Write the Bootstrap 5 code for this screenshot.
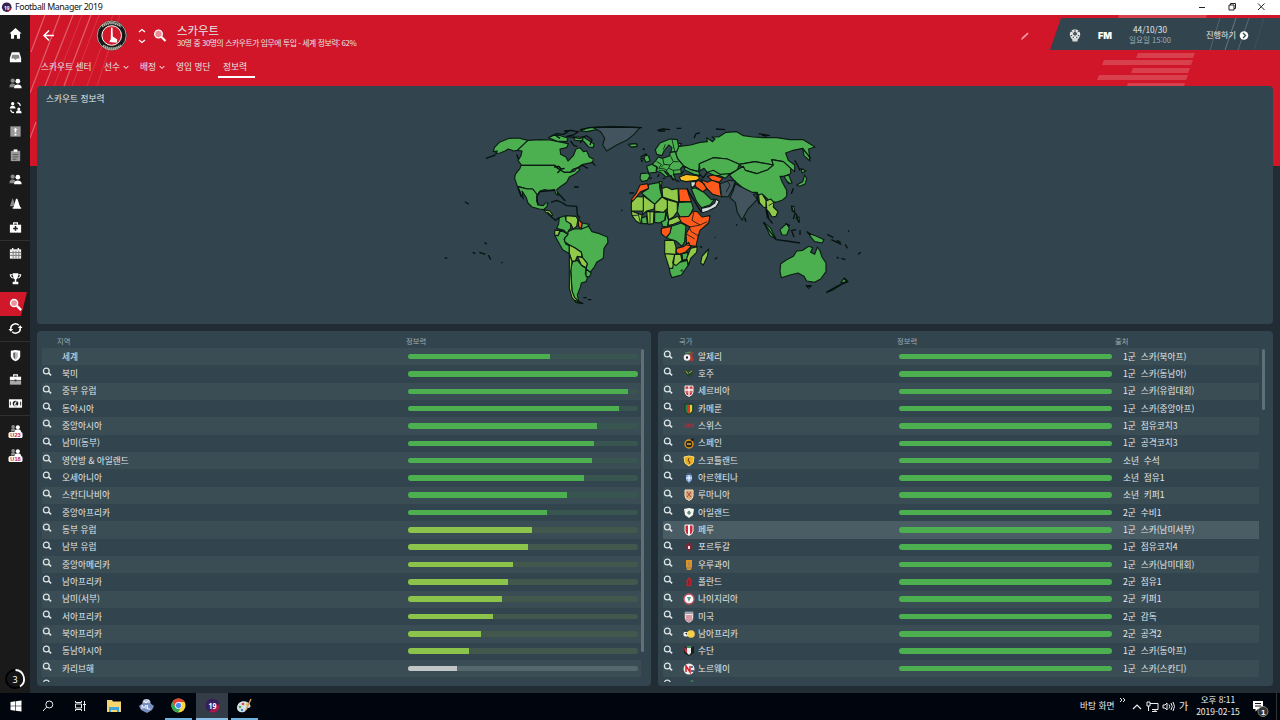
<!DOCTYPE html>
<html lang="ko">
<head>
<meta charset="utf-8">
<title>Football Manager 2019</title>
<link rel="stylesheet" href="https://cdn.jsdelivr.net/npm/bootstrap@5.3.0/dist/css/bootstrap.min.css">
<style>
  body{width:1280px;height:720px;overflow:hidden;font-family:"Noto Sans","Noto Sans CJK KR",sans-serif;font-size:8.7px;line-height:1;color:#e3e8ea;background:#222d36}
  svg{display:block;flex:none}
  .ko{font-family:"Noto Sans CJK KR",sans-serif;white-space:nowrap}
  .titlebar{height:15px;background:#fff;color:#111}
  .apptitle{font-size:8.8px;letter-spacing:-.38px}
  .game{height:678px}
  .side{width:30px;background:#1a1a1a;padding-top:6px}
  .side .it{height:24px;display:flex;align-items:center;justify-content:center}
  .side .rule{height:1px;background:#303030}
  .side .on{background:#d1172a;clip-path:polygon(0 0,27px 0,21px 100%,0 100%)}
  .stage{width:1250px;background:linear-gradient(#d01628 0 151px,#212c35 151px 100%)}
  .head{height:71px}
  .toprow{height:41px}
  .ttl{font-size:11.400px;line-height:14px}
  .subt{font-size:7.800px;line-height:11px;letter-spacing:-.4px;padding-top:0}
  .tabs{height:30px;padding-left:11px}
  .tabs>div{height:22px;display:flex;align-items:center;gap:3px}
  .tabs .sel{border-bottom:2px solid #fff;padding:2px 7px 0 5px;width:37px}
  .cont{width:230px;height:32px;margin-top:-3px;background:#32454e;clip-path:polygon(11px 0,100% 0,100% 100%,0 100%)}
  .pane{background:#32454e;border-radius:4px}
  .mapbox{width:1236px;height:238px;margin-left:7px}
  .lists{margin:7px 0 0 7px;gap:7px}
  .lp{width:614px;height:355px;padding:6px 5px 0}
  .rp{width:615px;height:355px;padding:6px 5px 0}
  .th9{height:11px;padding-top:1px;font-size:7.3px;color:#9dabb1}
  .rows{height:334px;overflow:hidden}
  .ln{height:17.333px}
  .ln:nth-child(odd){background:#3a4d54}
  .ln.hot{background:#4b5d64}
  .ln .tx{padding-top:1px}
  .lens{width:20px;padding-bottom:3px}
  .lastlens{padding-top:2px}
  .track{height:5.6px;border-radius:3px;overflow:hidden;background:#395550}
  .fill{height:100%}
  .sb{width:3px;border-radius:2px;background:#5f7178;margin-top:1px}
  .taskbar{height:27px;background:#01050d;color:#eee}
  .tk{width:32px;height:27px;display:flex;align-items:center;justify-content:center;border-bottom:2px solid transparent}
  .tk.run{border-color:#70b2df;width:27px;margin:0 3px}
  .tk.act{background:#343c47;border-color:#86bfe8}
</style>
</head>
<body class="d-flex flex-column">
<div class="titlebar d-flex align-items-center">
  <svg width="15" height="15" viewBox="0 0 15 15"><circle cx="6.7" cy="7.2" r="4.8" fill="#322151"/><path d="M6.5 12a4.8 4.8 0 0 0 5-5" fill="#b5193c"/><text x="4" y="10" font-size="6" font-weight="700" fill="#fff" textLength="5.500" lengthAdjust="spacingAndGlyphs">19</text></svg>
  <span class="apptitle">Football Manager 2019</span>
  <svg class="ms-auto" width="82" height="15" viewBox="0 0 82 15" fill="none" stroke="#222" stroke-width="1"><path d="M1 7.5h6M60 3.5l6.5 6.500M66.500 3.500l-6.500 6.500"/><path d="M31 5h5v5h-5zM32.500 5v-1.500h5v5h-1.500"/></svg>
</div>

<div class="game d-flex">
  <nav class="side d-flex flex-column position-relative" id="side"></nav>
  <main class="stage position-relative">
    <svg class="position-absolute top-0 start-0" width="1250" height="151" viewBox="30 15 1250 151" fill="none" stroke="#fff">
      <g stroke-opacity=".3" stroke-width="1.3"><path d="M45 15L31 52M60 15L30 93M73 15L45 86M91 15L64 86M36 122L30 138"/></g>
      <g stroke-opacity=".14" stroke-width="1"><path d="M82 15L54 86M99 15L72 86M113 15L87 86M120 15L97 86"/></g>
      <g fill="#fff" fill-opacity=".18" stroke="none"><path d="M1119 15h88l-1 3h-88zM1138 53h57l-2 5h-57zM1104 60h89l-2 5h-89zM1133 68h57l-2 5h-57zM1099 75h89l-2 5h-89zM1128 83h57l-1 3h-57z"/></g>
    </svg>
    <header class="head position-relative">
      <div class="toprow d-flex align-items-center">
        <svg width="147" height="41" viewBox="30 15 147 41">
          <path d="M54 35.500H44.500M49 30.500l-5 5 5 5" fill="none" stroke="#fff" stroke-width="1.5"/>
          <circle cx="111.700" cy="35.500" r="15" fill="#181818"/><circle cx="111.700" cy="35.500" r="14.500" fill="none" stroke="#cfcfc4" stroke-width=".8"/><circle cx="111.700" cy="35.500" r="9.800" fill="#d31a2c" stroke="#fff" stroke-width="1"/>
          <path d="M102 26.500q9.500-7 19 0M103 45.500q9 6 18 0" fill="none" stroke="#b9b9a8" stroke-width="2.300" stroke-dasharray="1.500 .5"/>
          <path d="M111 27.500h1.500l.3 9 4.500 3-.5 3.300-7.500-.8 1.500-3z" fill="#fff"/>
          <path d="M139 32l3-2.500 3 2.500M139 40l3 2.500 3-2.500" fill="none" stroke="#fff" stroke-width="1.300"/>
          <circle cx="158.500" cy="34" r="3.800" fill="#e98e97" stroke="#fff" stroke-width="1.300"/><path d="M161.500 37l4 4" stroke="#fff" stroke-width="2.200"/>
        </svg>
        <div class="ko">
          <div class="ttl">스카우트</div>
          <div class="subt">30명 중 30명의 스카우트가 임무에 투입 - 세계 정보력: 62%</div>
        </div>
        <svg class="ms-auto" style="margin-right:19px" width="12" height="12" viewBox="0 0 12 12"><path d="M2 10l1-2.500 5.500-5 1.200 1.200L4 9z" fill="#f19aa3"/></svg>
        <div class="cont d-flex align-items-center position-relative">
          <svg class="position-absolute top-0 start-0" width="230" height="32" viewBox="1050 18 230 32"><g stroke="#8295a0" fill="none"><path d="M1220 18l-10 32" stroke-opacity=".4"/><path d="M1236 18l-11 32" stroke-opacity=".65"/><path d="M1249 18l-11 32" stroke-opacity=".45"/><path d="M1264 18l-10 32" stroke-opacity=".15"/></g>
            <circle cx="1075" cy="34.500" r="5.200" fill="#e8e8e8"/><path d="M1072 38h6l-.5 3.500h-5z" fill="#d8d8d8"/><path d="M1073.500 33l1.500-1.200 1.500 1.200-.5 2h-2zM1070.500 36l1.800-.8M1079.500 36l-1.800-.8M1075 29.500v1.800M1071 31l1.500 1M1079 31l-1.500 1M1073 38l.7-1.500M1077 38l-.7-1.500" fill="#596970" stroke="#38464f" stroke-width="1"/>
            <text x="1098" y="39" font-family="Inter" font-size="9.500" font-weight="900" fill="#fff" textLength="14" lengthAdjust="spacingAndGlyphs">FM</text>
            <circle cx="1244" cy="35.500" r="4.300" fill="#fff"/><path d="M1243 33l2.500 2.500-2.500 2.500" fill="none" stroke="#32454e" stroke-width="1.300"/></svg>
          <div class="ko text-center" style="margin-left:76px;width:48px;padding-top:1px;font-size:8.3px;line-height:9.500px"><div>44/10/30</div><div style="color:#9daeb5;font-size:7.6px">일요일 15:00</div></div>
          <span class="ko position-relative" style="margin-left:32px;font-size:8.200px">진행하기</span>
        </div>
      </div>
      <div class="tabs d-flex ko">
        <div style="width:63px">스카우트 센터</div>
        <div style="width:36px">선수 <svg width="6" height="5" viewBox="0 0 6 5"><path d="M.7 1L3 3.500 5.300 1" fill="none" stroke="#fff"/></svg></div>
        <div style="width:36px">배정 <svg width="6" height="5" viewBox="0 0 6 5"><path d="M.7 1L3 3.500 5.300 1" fill="none" stroke="#fff"/></svg></div>
        <div style="width:42px">영입 명단</div>
        <div class="sel">정보력</div>
      </div>
    </header>

    <section class="pane mapbox position-relative">
      <div class="ko" style="padding:9px 9px 0;font-size:8.7px">스카우트 정보력</div>
      <svg class="position-absolute" style="left:403px;top:29px" width="430" height="200" viewBox="0 0 1290 600" stroke="#0b1c14" stroke-width="3.400" stroke-linejoin="round">
        <g fill="#4cb050">
          <path d="M163 98L178 82 208 70 235 69 264 76 232 106 222 108 205 102 195 108 180 114 166 116 172 108 160 110z"/>
          <path d="M264 76L300 74 330 75 355 80 385 86 380 98 360 102 362 118 378 126 384 138 392 130 400 122 408 102 420 98 430 110 440 108 448 126 460 132 458 142 430 148 415 158 400 162 390 172 372 172 350 156 345 151 244 150 234 136 243 122 246 108 232 106z"/>
          <path d="M243 151H345L352 160 372 172 392 172 404 168 412 158 420 164 404 178 388 186 380 202 360 216 350 224 354 242 347 236 344 224 326 226 312 224 300 228 292 240 278 222 262 222 246 218 232 214 224 190 226 178 240 160z"/>
          <path d="M232 214L246 218 262 222 278 222 292 240 290 258 294 270 310 272 316 264 324 264 320 276 310 284 298 282 276 276 264 264 258 246 246 228 250 252 244 240 238 224z"/>
          <path d="M358 308L374 302 378 314 392 326 392 340 386 346 384 358 372 346 350 340 356 326zM426 324L448 328 440 338 424 342z"/>
          <path d="M344 360L354 362 362 346 384 358 372 372 378 388 388 392V416L368 404 352 376z"/>
          <path d="M384 350L400 342 424 342 446 334 456 350 478 356 502 366 504 382 492 400 490 430 470 442 462 458 450 472 438 462 442 446 428 430 424 412 404 398 388 390 374 380 374 370 384 358z"/>
          <path d="M398 440L412 436 426 452 438 460 436 476 442 490 438 500 424 504 422 514 412 540 416 560 402 548 396 528 394 490 392 460zM438 462L454 474 448 486 438 484z"/>
          <path d="M325 68L340 60 362 62 384 70 380 80 350 78zM400 66L430 66 462 86 460 98 446 96 430 78 405 76zM420 48L445 38 480 36 470 44 440 50zM566 88L590 86 592 94 575 96z"/>
        </g>
        <g fill="#91c94b">
          <path d="M310 284L330 288 338 300 332 304 322 296zM378 302L408 304 414 314 410 334 400 342 392 326 378 318zM344 346L360 346 354 362 344 360zM388 390L404 398 424 412 426 426 412 424 406 438 396 438 388 416zM412 424L428 428 442 446 438 458 424 450z"/>
          <path d="M388 416L396 440 392 470 396 528 404 548 424 566 408 562 396 548 388 520z"/>
        </g>
        <path d="M414 312L426 324 424 342 416 334z" fill="#ff5a1c"/>
        <path d="M460 38L510 34 600 38 582 58 560 76 530 90 510 102 500 108 488 90 494 70 482 50z" fill="#44545f"/>
        <g fill="none" stroke="#071210" stroke-width="4">
          <path d="M138 130L166 120M330 66L350 56 370 58 390 46 415 50 400 60 380 64 420 70 440 62 456 74 450 90M345 60L360 70M372 48L400 46M430 70L420 84M392 78L402 92 412 94M420 44L450 38 540 36 606 38M342 156L356 154 364 162 374 160M352 174L362 164M412 160L425 150 444 160M455 140L466 152M236 134L230 118M234 220L244 246"/>
          <path d="M294 270L290 244 300 230 345 226M333 262L350 256 368 264 380 272 410 274 412 300 420 310M352 232L376 258M332 304L346 316 358 308M322 292L336 304M402 216L416 216M75 260L86 268M134 382L140 388M98 412L106 416M118 412L136 418M145 420L152 434M14 428L22 430M184 442L188 444M430 548H440M404 556L430 566"/>
          <path d="M444 554H454M568 234H582M545 284V288M610 100L614 104"/>
        </g>
        <g transform="translate(540 0)">
          <g fill="#4cb050">
            <path d="M168 84L185 86 178 94 212 90 240 82 262 80 260 68 278 80 285 72 276 66 296 66 318 52 350 50 370 62 400 66 430 68 470 68 510 74 550 74 585 96 566 102 570 138 552 122 548 100 520 106 497 114 505 136 524 150 524 170 512 160 490 140 455 134 460 150 405 140 358 148 322 132 280 128 238 146 236 170 212 164 190 152 172 130 166 110z"/>
            <path d="M238 146L280 128 322 132 358 148 352 164 330 176 300 178 280 166 262 172 252 160 240 168zM358 148L405 140 460 150 444 164 410 176 376 166zM262 172L280 166 300 178 330 176 316 190 300 182 285 182z"/>
            <path d="M328 180L352 164 370 154 376 166 410 176 444 164 460 150 455 134 490 140 512 160 512 176 492 184 480 184 486 200 500 226 500 244 486 256 468 262 448 258 430 240 400 236 372 222 344 198z"/>
            <path d="M492 184L506 180 516 204 506 206 498 194zM554 180L560 190 556 206 540 214 530 210 548 200zM543 160L558 168 546 174z"/>
            <path d="M62 176L84 174 90 182 82 196 66 200 60 190zM80 154L96 148 110 156 108 172 86 174z"/>
            <path d="M72 130L78 118 86 124 90 138 78 142zM62 130L70 130 66 140z"/>
            <path d="M106 104L120 84 150 72 172 74 176 96 170 110 152 112 156 98 146 90 132 108 126 122 110 118z"/>
            <path d="M96 148L108 136 114 126 128 130 150 122 150 112 166 110 172 130 190 152 182 160 184 176 160 178 168 196 154 188 142 172 132 168 146 184 138 186 122 172 110 170 112 156z"/>
            <path d="M190 152L212 164 236 170 240 182 222 178 196 166z"/>
            <path d="M86 208L118 202 120 222 126 246 104 268 64 234 84 222zM176 262L214 260 220 280 208 304 180 306 172 290z"/>
            <path d="M104 292L138 290 134 316 118 324 104 322zM138 292L146 316 142 336 128 334 124 322 136 314zM154 334L184 324 198 332 196 356 194 380 186 394 168 378 148 372 140 368 150 354zM186 416L204 412 202 432 188 436zM148 460L158 446 186 440 202 436 204 452 184 480 156 488 150 474zM64 310L80 304 82 326 66 326z"/>
            <path d="M214 222L226 218 252 232 274 254 284 252 270 270 244 278 230 260z"/>
            <path d="M432 322L452 340 468 372 450 362zM480 344L500 326 508 340 500 360 486 360zM564 354L590 364 612 374 606 384 584 380 574 368z"/>
            <path d="M482 446L500 434 520 424 530 408 548 406 566 394 578 398 572 412 584 418 592 396 600 408 606 426 618 444 618 470 602 492 584 502 560 498 552 484 534 474 510 480 484 488 480 470zM558 512L574 512 566 520zM620 532L650 514 664 508 642 524zM662 504L680 500 672 490z"/>
            <path d="M25 88L48 86 52 94 34 96zM516 274L522 274 524 290 516 288zM528 308L538 306 538 322z"/>
          </g>
          <g fill="#91c94b">
            <path d="M118 200L126 200 124 220zM126 220L140 216 156 224 174 220 176 262 146 252 128 246zM34 262L44 244 70 246V288L34 288zM70 242L104 268 102 282 80 288 66 300 70 286zM104 268L126 246 142 256V280L130 292 104 288zM142 254L172 262 172 290 160 306 146 314 142 290zM34 288L66 300 62 326 48 318 36 302zM80 290L102 290 100 326 84 328zM146 316L174 304 184 318 160 328 144 332zM134 376L162 376 168 396 168 418 134 416zM212 400L232 394 230 412 212 430 206 450 200 430zM134 416L164 418 158 460 148 460zM164 418L182 418 186 436 168 452 158 444zM246 424L266 402 262 424 250 450 242 444z"/>
            <path d="M416 240L426 236 438 256 440 280 430 276 418 262zM438 258L452 252 462 262 460 276 474 290 468 304 456 306 446 290 438 282z"/>
          </g>
          <g fill="#ff5a1c">
            <path d="M60 210L82 206 86 220 62 230 46 250 34 262 36 250 48 236zM176 222L202 222 206 238 214 260 178 260z"/>
            <path d="M176 306L206 304 220 288 232 290 246 306 270 302 266 324 240 346 234 366 228 394 200 390 198 356 210 336 184 322zM124 340L154 334 150 354 138 368 124 356zM170 400L192 394 206 382 212 396 196 412 178 418 168 412z"/>
            <path d="M262 184L280 180 308 190 298 202 276 196zM244 194L262 202 276 196 298 204 302 236 308 246 278 238 262 222 250 206zM222 204L236 196 252 206 260 222 248 230 228 216z"/>
          </g>
          <g fill="#44545f"><path d="M300 206L330 196 346 198 338 222 324 246 304 244 302 220zM346 206L360 214 396 232 412 232 414 250 400 266 384 282 374 300 366 316 352 292 346 262 330 248 340 226zM400 238L410 236 412 252z"/></g>
          <path d="M178 186L200 178 232 182 240 190 230 196 198 200 182 196z" fill="#ffbf1f"/>
          <path d="M212 200L228 200 224 212 214 218zM244 280L270 274 284 264 288 252 298 260 288 276 264 288 246 294z" fill="#d5d9df"/>
          <g fill="none" stroke-width="2.500">
            <path d="M110 140L124 148 116 160 130 160 142 168M128 130L132 148 150 150 160 140 152 124M132 148L124 156M150 150L146 160 160 166 180 164M146 160L138 166M160 140L176 140M160 166L162 178M116 166L132 166M136 88L130 104M156 74L164 108M206 334L214 350 234 362M222 290L216 316 240 330 262 320M210 336L240 330M198 356L224 372M54 292L60 320M90 290V326M36 302L56 300M322 198L330 210 318 232M240 196L250 190M188 462L182 468 190 468M462 262L446 272"/>
          </g>
          <g fill="none" stroke="#071210" stroke-width="4">
            <path d="M112 46L128 42 150 44M116 48H136M170 40H184M288 42L316 44M222 70L228 56 240 54M416 56L450 62M426 60L440 64M62 126L80 116M68 102L72 104M88 192L96 188M112 186L118 178M128 190L136 190M152 180L160 196M168 196L178 200M182 178L192 168M238 178L250 188 262 172M524 136L532 150 540 166M506 206V200M520 220L514 236M514 272L518 286 530 300 536 322M524 298L520 312M374 308L378 320M438 284L442 306 458 326M430 322L468 374 500 378 540 384M496 326L510 332M512 348L528 344M516 350L522 366M540 346V360M560 350L574 360M622 358L640 368M634 374L664 388M650 376L662 382M676 388L682 400M650 426L656 430M664 430L676 434M714 418L722 412M686 346V350M620 532L664 508 684 500 672 488M560 514H574M284 432L292 428M240 394L246 398M286 366V368M350 328V332M200 220L244 292M410 246L418 268M548 100L572 130M440 284L446 308"/>
          </g>
        </g>
      </svg>
    </section>

    <div class="lists d-flex">
      <section class="pane lp">
        <div class="th9 ko d-flex"><span style="width:350px;padding-left:15px">지역</span><span style="padding-left:14px">정보력</span></div>
        <div class="d-flex"><div class="rows flex-fill" id="regions"></div><div class="sb" style="height:303px"></div><div style="width:2px"></div></div>
      </section>
      <section class="pane rp">
        <div class="th9 ko d-flex"><span style="width:234px;padding-left:16px">국가</span><span style="width:218px">정보력</span><span>출처</span></div>
        <div class="d-flex"><div class="rows" style="width:596px" id="nations"></div><div class="sb" style="height:61px;margin-left:3px"></div></div>
      </section>
    </div>
  </main>
</div>

<footer class="taskbar d-flex">
  <div class="tk"><svg width="12" height="12" viewBox="0 0 12 12" fill="#fff"><path d="M.5 2l4.700-.7v4.400H.5zM5.800 1.200L11.500.4v5.300H5.800zM.5 6.300h4.700v4.400L.5 10zM5.800 6.300h5.700v5.300l-5.700-.8z"/></svg></div>
  <div class="tk"><svg width="12" height="12" viewBox="0 0 12 12" fill="none" stroke="#eee"><circle cx="7.300" cy="4.500" r="3.500"/><path d="M4.700 7L1 11"/></svg></div>
  <div class="tk"><svg width="13" height="12" viewBox="0 0 13 12" fill="none" stroke="#eee"><path d="M1.500 4h6v4h-6zM1.500 1v1.500h6V1M1.500 11V9.500h6V11M10.500 1v10M9 4.500h3"/></svg></div>
  <div class="tk" style="margin-left:2px"><svg width="16" height="14" viewBox="0 0 16 14"><path d="M1 1h5l1 1.500h8V13H1z" fill="#f6d56c"/><path d="M3 8h10v5h-2v-2H5v2H3z" fill="#3ea6df"/></svg></div>
  <div class="tk"><svg width="17" height="15" viewBox="0 0 17 15"><circle cx="8.500" cy="5" r="4" fill="#b9c5dd"/><path d="M1 8l4-3h7l4 3-2 4-5 3-6-3z" fill="#7890bd"/><path d="M4 11V7l2 3 2-3v4M9.500 7v4h3M6 3l2 2 3-3" fill="none" stroke="#eef3ff"/></svg></div>
  <div class="tk run"><svg width="15" height="15" viewBox="0 0 15 15"><circle cx="7.500" cy="7.500" r="7" fill="#fdd440"/><path d="M1.400 4A7 7 0 0 1 13.600 4H7.500l-3 5.300z" fill="#e34334"/><path d="M1.400 4l3.300 5.500 5.600-.3-3.400 5.300A7 7 0 0 1 1.400 4z" fill="#30a852"/><circle cx="7.500" cy="7.500" r="3.200" fill="#4b8bf4" stroke="#fff" stroke-width=".9"/></svg></div>
  <div class="tk act" style="margin-left:1px"><svg width="15" height="15" viewBox="0 0 15 15"><circle cx="7.500" cy="7.500" r="7" fill="#35205b"/><path d="M14.500 6A7 7 0 0 1 4 13.500l5-4z" fill="#a81a4b"/><text x="3.500" y="11" font-family="Open Sans" font-size="9.500" font-weight="700" fill="#fff" textLength="8" lengthAdjust="spacingAndGlyphs">19</text></svg></div>
  <div class="tk run"><svg width="17" height="16" viewBox="0 0 17 16"><path d="M1 10c0-5 5-8 10-6 4 2 5 6 1 6-3 0-1 3-4 4-4 1-7-1-7-4z" fill="#d5e2e9"/><circle cx="4" cy="9" r="1.300" fill="#4ca64d"/><circle cx="7" cy="6" r="1.300" fill="#d94840"/><circle cx="11" cy="6.500" r="1.300" fill="#e9b938"/><circle cx="6" cy="12" r="1.200" fill="#3c83cb"/><path d="M15 1L10 12" stroke="#d09a58" stroke-width="1.500"/></svg></div>
  <span class="ko ms-auto" style="font-size:8.700px;padding-top:9px;width:39px">바탕 화면</span>
  <svg width="75" height="27" viewBox="1119 693 75 27" fill="none" stroke="#eee"><path d="M1120 698l2 2-2 2M1123 698l2 2-2 2"/><path d="M1133 709l4-4 4 4" stroke-width="1.200"/><path d="M1150 703.500h8v6h-6M1155 709v3M1152 711.500h5M1147 702h3v4h-3zM1148.500 706v5" /><path d="M1163 705h2l2-2v7l-2-2h-2zM1169 704.500q1.500 2 0 4M1171 703q2.500 3.500 0 7M1173 702q3 4.500 0 9"/><text class="ko" x="1179" y="710" font-size="10" fill="#eee" stroke="none">가</text></svg>
  <div class="ko text-center" style="width:48px;font-size:8.500px;line-height:12px"><div>오후 8:11</div><div>2019-02-15</div></div>
  <svg width="38" height="27" viewBox="1242 693 38 27"><path d="M1253 701h10v8h-5l-2.500 2.500V709H1253z" fill="#fff"/><path d="M1255 703.500h6M1255 706h6" stroke="#111"/><circle cx="1263" cy="711.500" r="5" fill="#333" stroke="#999" stroke-width=".8"/><text x="1261" y="714.500" font-family="Liberation Sans" font-size="8" font-weight="700" fill="#fff">1</text><path d="M1276.500 693v27" stroke="#333"/></svg>
</footer>

<script src="https://cdn.jsdelivr.net/npm/bootstrap@5.3.0/dist/js/bootstrap.bundle.min.js"></script>
<script>
const lens = '<svg width="10" height="10" viewBox="0 0 10 10" fill="none" stroke="#dce5e7" stroke-width="1.25"><circle cx="4.300" cy="4" r="2.900"/><path d="M6.500 6l2.600 2.400" stroke-width="1.700"/></svg>';
const G='#4caf50', L='#8cc34a', W='#c3c6c7';
const regions = [['세계',142,G],['북미',229.5,G],['중부 유럽',220,G],['동아시아',211,G],['중앙아시아',189,G],['남미(동부)',185.5,G],['영연방 & 아일랜드',184,G],['오세아니아',175.5,G],['스칸디나비아',158.5,G],['중앙아프리카',139,G],['동부 유럽',123.5,L],['남부 유럽',120,L],['중앙아메리카',104.5,L],['남아프리카',100,L],['남미(서부)',94,L],['서아프리카',84.5,L],['북아프리카',72.5,L],['동남아시아',60.5,L],['카리브해',49,W]];
const tint = {[G]:'#395550',[L]:'#42584d',[W]:'#56676d'};
document.getElementById('regions').innerHTML = regions.map(([n,v,c],i)=>
 `<div class="ln d-flex align-items-center ko"><div class="lens">${i?lens:''}</div><div class="tx" style="width:346px">${n}</div><div class="track" style="width:229.5px;background:${tint[c]}"><div class="fill" style="width:${v}px;background:${c}"></div></div></div>`).join('')
 + `<div class="ln lastlens" style="background:none">${lens}</div>`;
const sh='M2 1h8v6q0 3-4 4.500Q2 10 2 7z';
const crest = [
 '<path d="M6 2l5-1-2 3 2 5-4 2z" fill="#a83a32"/><path d="M2 2l6-1" stroke="#4b9b45"/><circle cx="4" cy="6.500" r="3.300" fill="#eee"/><path d="M3 5.500h2v2H3z" fill="#111"/>',
 '<path d="M2 3l3-1 1 2 2-2 2 2-1 4-3 1-3-2z" fill="#24452b"/><path d="M3 3l2 3M9 3L6 5" stroke="#b9a92e"/>',
 `<path d="${sh}" fill="#c8343b" stroke="#eee"/><path d="M6 1v10M2 5h8" stroke="#fff" stroke-width="1.300"/><path d="M4 3v5M8 3v5" stroke="#f2c8c0" stroke-width=".7"/>`,
 `<path d="${sh}" fill="#278544" stroke="#26301d"/><path d="M5 2h2v8H5z" fill="#d8352c"/><path d="M7 2h2v6L7 10z" fill="#f0cd36"/>`,
 '<path d="M1 8l2-4h3L4.500 8M6 8l2-4h2.500L10 8M2 6h8" fill="none" stroke="#b52a3c" stroke-width=".8"/>',
 '<circle cx="6" cy="7" r="4" fill="#302414" stroke="#e29a24" stroke-width="1.300"/><path d="M4 7h4" stroke="#f3d046" stroke-width="1.300"/><path d="M7 3l4-2-1 3z" fill="#151515"/>',
 `<path d="M1 2l5-1 5 1-1 6-4 3-4-3z" fill="#edae22" stroke="#f8de74"/><path d="M6 3L5 6l2 1-1 2" stroke="#744416" fill="none"/>`,
 '<path d="M3 3h6v5l-3 3-3-3z" fill="#7ea7df"/><path d="M3 6h6M6 3v6" stroke="#fff"/><path d="M4 1h4v2H4z" fill="#4b607e"/>',
 `<path d="${sh}" fill="#d9a477" stroke="#eee2c3"/><path d="M4 3l4 5M8 3L4 8" stroke="#a34b3c"/>`,
 `<path d="M1 2l5-1 5 1-1 6-4 3-4-3z" fill="#f3f5f2"/><path d="M4 6q2-5 4 0l-2 2z" fill="#638979"/>`,
 `<path d="${sh}" fill="#d22736" stroke="#eee"/><path d="M5 1h2v10H5z" fill="#fff"/>`,
 '<path d="M4 2h4l1 3 1 1-2 2-2 3-2-3-2-2 1-1z" fill="#7d2635"/><path d="M5 5h2v3H5z" fill="#f1dce0"/>',
 '<path d="M3 1h6v6l-1 4H4L3 7z" fill="#df942b"/><path d="M6 3v4M4 9h4" stroke="#8d7c68"/>',
 '<path d="M6 1l3 3-1 3 1 3H3l1-3-1-2z" fill="#b62630"/><path d="M6 4v5" stroke="#6f1822"/>',
 '<circle cx="6" cy="6" r="5" fill="#fff" stroke="#ce5062" stroke-width="1.300"/><path d="M4 4h4L6 9z" fill="#5d9d87"/>',
 `<path d="${sh}" fill="#eee2e5" stroke="#c5c9cf" stroke-width=".6"/><path d="M4 4v6M6 4v7M8 4v6" stroke="#c95464"/><path d="M2 2h8" stroke="#566685"/>`,
 '<circle cx="3" cy="6" r="2.600" fill="#eee"/><path d="M2 5h2v2z" fill="#222"/><circle cx="8" cy="6" r="3.800" fill="#f4cf48"/><path d="M1 2l3 2" stroke="#222"/>',
 `<path d="M1 1l4 3h2l4-3v7l-5 3-5-3z" fill="#1b1d1d"/><path d="M4 3h4v5l-2 2-2-2z" fill="#eee"/><path d="M1 2l3 2v4L2 7z" fill="#c52f3c"/><path d="M4 1h4v2H4z" fill="#3a8a53"/>`,
 '<circle cx="6" cy="6" r="5.500" fill="#eee"/><path d="M3 9V3l4 6V3" fill="none" stroke="#d11f30" stroke-width="1.500"/><path d="M9 3v2M8 8h3" stroke="#223d76" stroke-width="1.300"/>'];
const nations=[['알제리','1군  스카(북아프)'],['호주','1군  스카(동남아)'],['세르비아','1군  스카(유럽대회)'],['카메룬','1군  스카(중앙아프)'],['스위스','1군  점유코치3'],['스페인','1군  공격코치3'],['스코틀랜드','소년  수석'],['아르헨티나','소년  점유1'],['루마니아','소년  키퍼1'],['아일랜드','2군  수비1'],['페루','1군  스카(남미서부)'],['포르투갈','1군  점유코치4'],['우루과이','1군  스카(남미대회)'],['폴란드','2군  점유1'],['나이지리아','2군  키퍼1'],['미국','2군  감독'],['남아프리카','2군  공격2'],['수단','1군  스카(동아프)'],['노르웨이','1군  스카(스칸디)']];
document.getElementById('nations').innerHTML = nations.map(([n,s],i)=>
 `<div class="ln d-flex align-items-center ko${i==10?' hot':''}"><div class="lens">${lens}</div><svg width="12" height="12" viewBox="0 0 12 12">${crest[i]}</svg><div class="tx" style="width:204px;padding-left:3px">${n}</div><div class="track" style="width:213px"><div class="fill" style="width:213px;background:${G}"></div></div><div class="tx" style="padding-left:11px;white-space:pre">${s}</div></div>`).join('')
 + `<div class="ln lastlens d-flex" style="background:none">${lens}<svg class="ms-3" width="6" height="4" viewBox="0 0 6 4"><path d="M1 2.500L3 1l2 1.500z" fill="#4b9b45"/></svg></div>`;

const ico = {
 home:'<path d="M8 2l6.500 6h-1.700v5.500H9.500V9.500h-3v4H3.200V8H1.500z"/>',
 inbox:'<path d="M4 2.500h8l2 6V13H2V8.500z"/><path d="M4.500 5h7l1 4h-3l-1 1.500h-1L6.500 9h-3z" fill="#888"/>',
 squad:'<g fill="#888"><circle cx="5" cy="5" r="2.300"/><path d="M1.500 12q0-4 3.500-4t3.500 4z"/></g><circle cx="10.500" cy="5.500" r="2.500"/><path d="M6.500 13q0-4 4-4t4 4z"/>',
 swap:'<circle cx="5" cy="4" r="1.800"/><path d="M2 9q0-3 3-3t3 3z"/><circle cx="11.500" cy="9.500" r="1.600"/><path d="M8.500 14q0-3 3-3t3 3z"/><path d="M10 3q3 0 3 3.500M3 10.500q0 3 3.500 3" fill="none" stroke="#fff" stroke-width="1.300"/>',
 tactic:'<path d="M2.500 2.500h11v11h-11z" fill="#999"/><path d="M8 4l2 2.500H6zM7.200 6h1.600v3H7.200zM7 10.500h2v1.800H7z"/>',
 clip:'<path d="M3 3h10v11H3z" fill="#999"/><path d="M6 1.500h4V4H6z"/><path d="M5 7h6M5 9.500h6M5 12h4" stroke="#555"/>',
 cone:'<path d="M5 2l3 9H2z" fill="#888"/><path d="M8.500 3h1.500l3 9h1v1.500H5V12h1z"/>',
 med:'<path d="M2 5h12v8.500H2z"/><path d="M6 5V3h4v2" fill="none" stroke="#fff" stroke-width="1.300"/><path d="M8 6.500v5M5.500 9h5" stroke="#222" stroke-width="1.600"/>',
 cal:'<path d="M2 3.500h12v10H2z" fill="#eee"/><path d="M2 7h12M2 10h12M5.500 5v8M8.500 5v8M11.500 5v8" stroke="#777"/><path d="M5 2v2M11 2v2" stroke="#fff" stroke-width="1.500"/>',
 cup:'<path d="M5 2.500h6q0 5-2.200 6.500v2.500H11V14H5v-2.500h2.200V9Q5 7.500 5 2.500z"/><path d="M5 4H2.500Q3 7.500 6 7.500M11 4h2.500Q13 7.500 10 7.500" fill="none" stroke="#fff" stroke-width="1.200"/>',
 find:'<circle cx="6.500" cy="6.500" r="3.800" fill="#eb929c" stroke="#fff" stroke-width="1.500"/><path d="M9.500 9.500l4.500 4.500" stroke="#fff" stroke-width="2.500"/>',
 loop:'<path d="M3 8.500A5 4.800 0 0 1 11.500 4.500M13 7.500A5 4.800 0 0 1 4.500 11.500" fill="none" stroke="#fff" stroke-width="1.700"/><path d="M10.500 7.500h5L13 4.500zM.5 8.500h5L3 11.500z"/>',
 shield:'<path d="M3 3l5-.8L13 3v6q-1 4-5 5-4-1-5-5z"/><path d="M5.500 5L8 4.500v7.800Q5.500 11 5.500 8.500z" fill="#666"/><path d="M8 4.500l2.500.5v4q-.5 2-2.500 3.300z" fill="#bbb"/>',
 brief:'<path d="M2 5h12v3.500H2z"/><path d="M2 9h12v4.500H2z" fill="#aaa"/><path d="M6 5V3h4v2" fill="none" stroke="#fff" stroke-width="1.200"/><path d="M7 8h2v2H7z" fill="#333"/>',
 cash:'<path d="M1 3.500h14v9H1z"/><circle cx="8" cy="8" r="3" fill="#222"/><path d="M9.500 6.300Q7.500 5.500 7.500 8l-.6 2h3M6.500 8.200h2" fill="none" stroke="#fff"/><path d="M2.500 6v4M13.500 6v4" stroke="#222"/>'
};
const youth = t=>`<g fill="#888"><circle cx="5.500" cy="3" r="2"/><path d="M3 8q0-3.500 2.500-3.500T8 8z"/></g><circle cx="10.500" cy="3.500" r="2.200"/><path d="M7 9q0-3.500 3.500-3.500T14 9z"/><rect x=".5" y="8.500" width="15" height="6.500" rx="2"/><text x="2.500" y="14" font-family="Liberation Sans" font-size="6" font-weight="700" fill="#c52437" textLength="11" lengthAdjust="spacingAndGlyphs">${t}</text>`;
ico.u23=youth('U23'); ico.u18=youth('U18');
const list=['home','inbox',2.5,'squad','swap','tactic','clip','squad','cone','med','-',1,'cal',.5,'cup',2,'find',.5,'loop','-',1.5,'shield','brief','cash','-',3,'u23','u18'];
document.getElementById('side').innerHTML = list.map(k=> k==='-'?'<div class="rule"></div>': typeof k==='number'?`<div style="height:${k}px"></div>`:
 `<div class="it${k==='find'?' on':''}"><svg width="15" height="15" viewBox="0 0 16 16" fill="#fff">${ico[k]}</svg></div>`).join('')
 + '<svg class="mt-auto" width="30" height="28" viewBox="0 0 30 28"><circle cx="15" cy="14" r="9" fill="#151515" stroke="#000" stroke-width="2"/><path d="M15.500 5a9 9 0 0 1 4.500 16.500" fill="none" stroke="#fff" stroke-width="1.800"/><text x="12.500" y="17.500" font-size="9" fill="#fff">3</text></svg>';
</script>
</body>
</html>
